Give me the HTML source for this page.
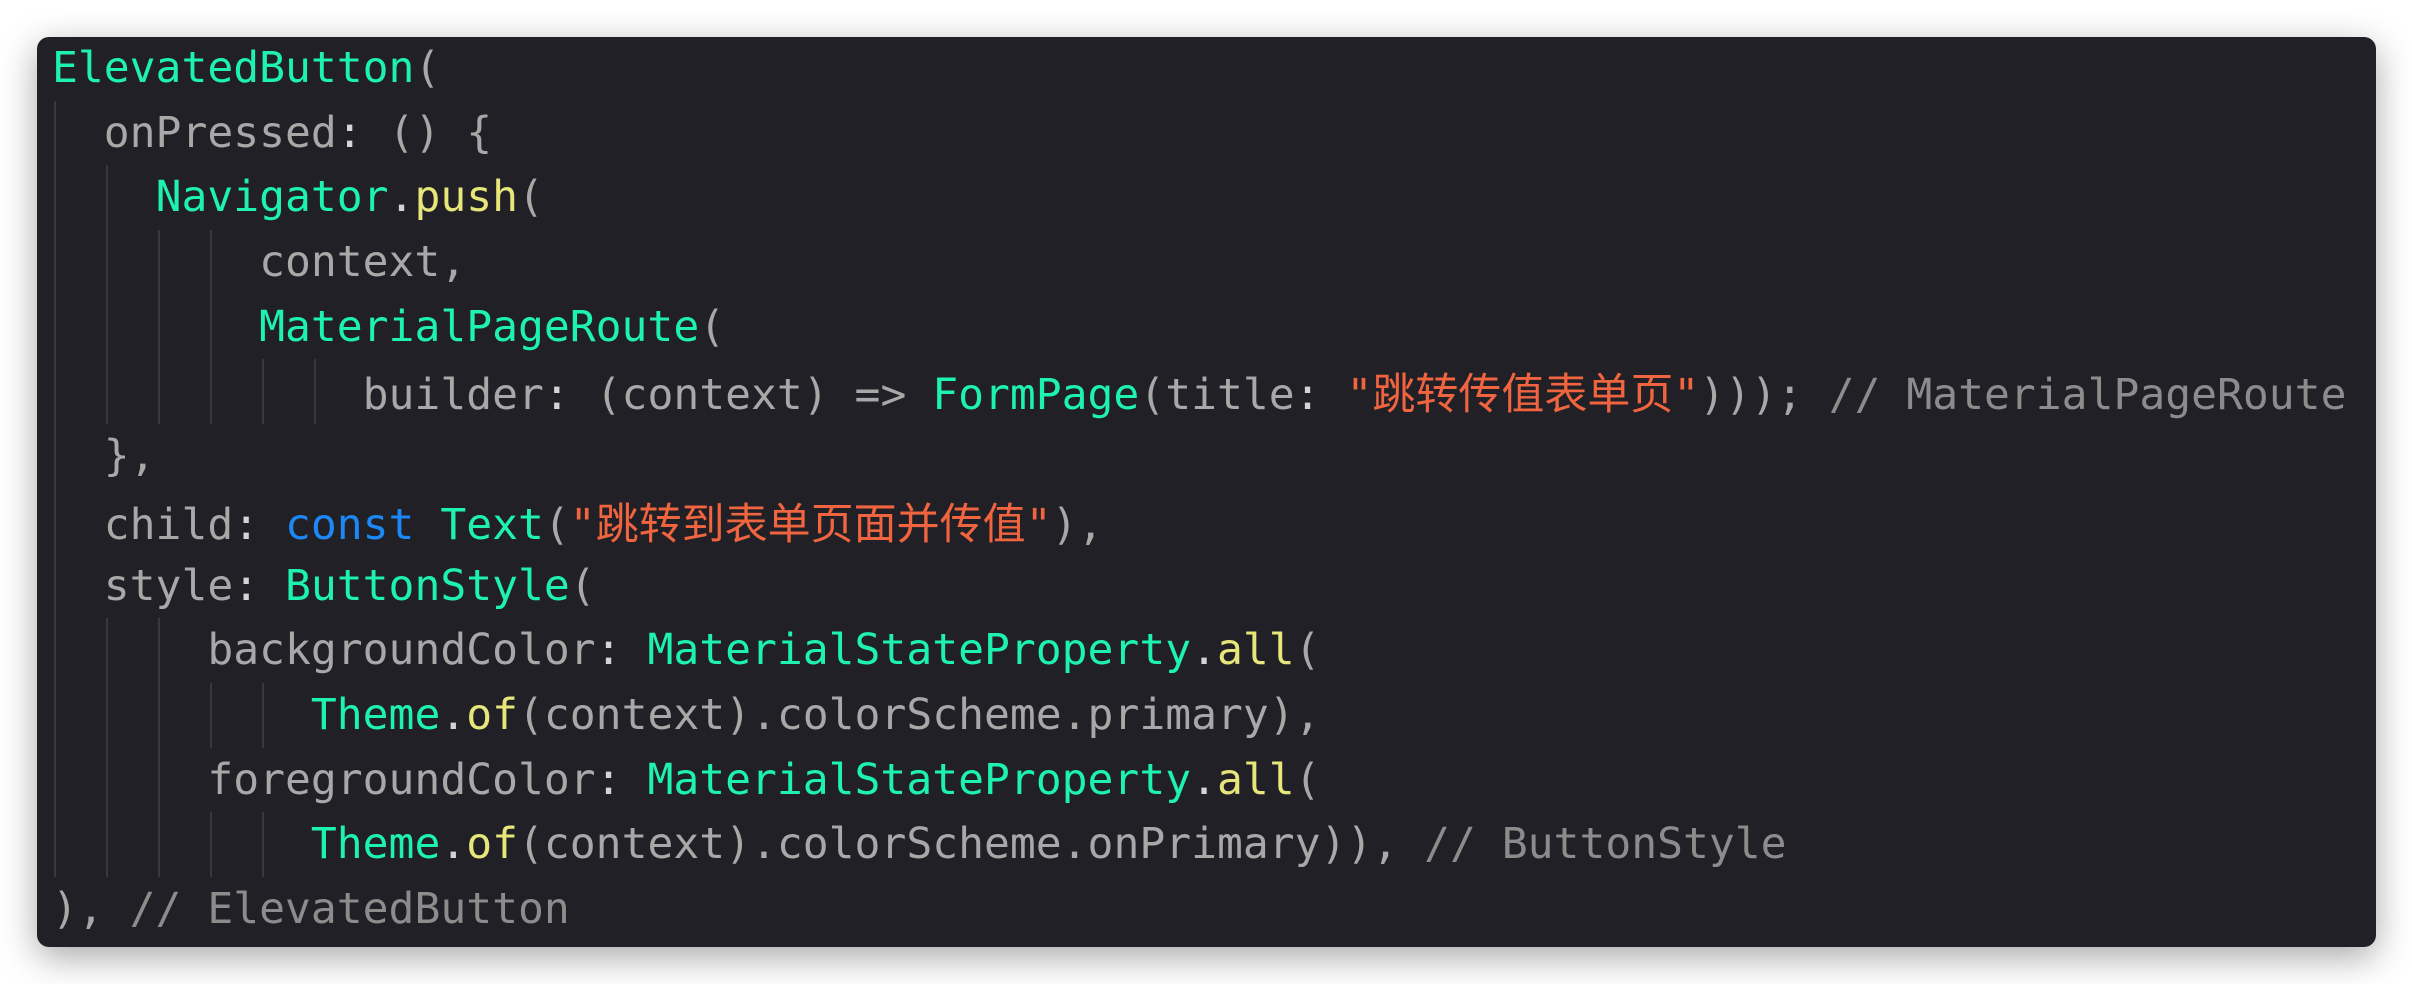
<!DOCTYPE html>
<html><head><meta charset="utf-8"><style>
html,body{margin:0;padding:0;background:#fff;width:2412px;height:984px;overflow:hidden}
.box{position:absolute;left:37px;top:37px;width:2339px;height:910px;background:#212026;border-radius:12px;box-shadow:0 10px 36px rgba(0,0,0,.35)}
.code{position:absolute;left:52px;top:36px;font-family:"DejaVu Sans Mono","Liberation Mono","Noto Sans CJK SC",monospace;font-size:43px;color:#a8a8a8}
.l{position:relative;height:64.7px;line-height:64.7px;white-space:pre}
.g{position:absolute;top:0;width:2px;height:64.7px;background:#38383e}
.t{color:#1ef2b2}.y{color:#e6e67a}.b{color:#1b88f5}.s{color:#f0643f}.c{color:#8c8c8c}.p{color:#d4d4d4}
.cj{font-family:"Noto Sans CJK SC",sans-serif;font-size:43px}
</style></head><body>
<div class="box"></div>
<div class="code">
<div class="l"><span class="t">ElevatedButton</span>(</div>
<div class="l"><i class="g" style="left:2px"></i>  onPressed<span class="p">:</span> () {</div>
<div class="l"><i class="g" style="left:2px"></i><i class="g" style="left:54px"></i>    <span class="t">Navigator</span><span class="p">.</span><span class="y">push</span>(</div>
<div class="l"><i class="g" style="left:2px"></i><i class="g" style="left:54px"></i><i class="g" style="left:106px"></i><i class="g" style="left:158px"></i>        context,</div>
<div class="l"><i class="g" style="left:2px"></i><i class="g" style="left:54px"></i><i class="g" style="left:106px"></i><i class="g" style="left:158px"></i>        <span class="t">MaterialPageRoute</span>(</div>
<div class="l"><i class="g" style="left:2px"></i><i class="g" style="left:54px"></i><i class="g" style="left:106px"></i><i class="g" style="left:158px"></i><i class="g" style="left:210px"></i><i class="g" style="left:262px"></i>            builder<span class="p">:</span> (context) =&gt; <span class="t">FormPage</span>(title<span class="p">:</span> <span class="s">"<span class="cj">跳转传值表单页</span>"</span>))); <span class="c">// MaterialPageRoute</span></div>
<div class="l"><i class="g" style="left:2px"></i>  },</div>
<div class="l"><i class="g" style="left:2px"></i>  child<span class="p">:</span> <span class="b">const</span> <span class="t">Text</span>(<span class="s">"<span class="cj">跳转到表单页面并传值</span>"</span>),</div>
<div class="l"><i class="g" style="left:2px"></i>  style<span class="p">:</span> <span class="t">ButtonStyle</span>(</div>
<div class="l"><i class="g" style="left:2px"></i><i class="g" style="left:54px"></i><i class="g" style="left:106px"></i>      backgroundColor<span class="p">:</span> <span class="t">MaterialStateProperty</span><span class="p">.</span><span class="y">all</span>(</div>
<div class="l"><i class="g" style="left:2px"></i><i class="g" style="left:54px"></i><i class="g" style="left:106px"></i><i class="g" style="left:158px"></i><i class="g" style="left:210px"></i>          <span class="t">Theme</span><span class="p">.</span><span class="y">of</span>(context).colorScheme.primary),</div>
<div class="l"><i class="g" style="left:2px"></i><i class="g" style="left:54px"></i><i class="g" style="left:106px"></i>      foregroundColor<span class="p">:</span> <span class="t">MaterialStateProperty</span><span class="p">.</span><span class="y">all</span>(</div>
<div class="l"><i class="g" style="left:2px"></i><i class="g" style="left:54px"></i><i class="g" style="left:106px"></i><i class="g" style="left:158px"></i><i class="g" style="left:210px"></i>          <span class="t">Theme</span><span class="p">.</span><span class="y">of</span>(context).colorScheme.onPrimary)), <span class="c">// ButtonStyle</span></div>
<div class="l">), <span class="c">// ElevatedButton</span></div>
</div>
</body></html>
